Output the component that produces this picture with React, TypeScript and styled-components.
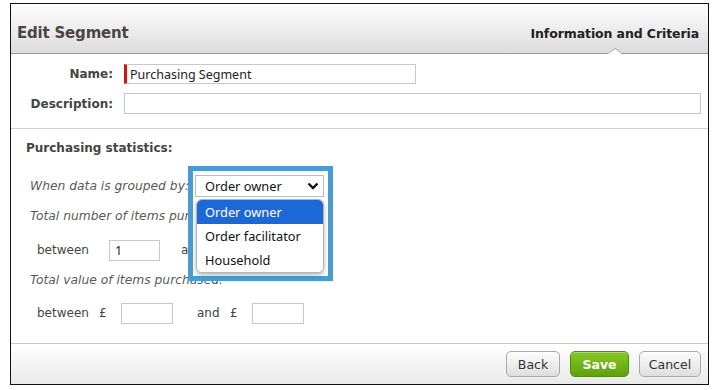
import * as React from 'react';
import styled, { createGlobalStyle, css } from 'styled-components';

const GlobalStyle = createGlobalStyle`
  html, body {
    margin: 0;
    padding: 0;
    background: #fff;
  }
  body {
    font-family: 'DejaVu Sans', Verdana, sans-serif;
    color: #333;
  }
`;

const Page = styled.div`
  padding: 3px 0 0 10px;
`;

const Dialog = styled.div`
  width: 697px;
  height: 380px;
  border: 1px solid #111;
  display: flex;
  flex-direction: column;
  background: #fff;
`;

const Header = styled.div`
  position: relative;
  flex-shrink: 0;
  border-bottom: 1px solid #9c9c9c;
  background: linear-gradient(#fefefe, #dcdcdc);
  display: flex;
  align-items: center;
  justify-content: space-between;
  padding: 5px 9px 0 6px;
  box-sizing: border-box;
  height: 50px;
`;

const Title = styled.h1`
  margin: 3px 0 0;
  font-size: 15px;
  font-weight: bold;
  color: #4a4540;
  letter-spacing: -0.2px;
`;

const TabLabel = styled.div`
  font-size: 12.5px;
  font-weight: bold;
  color: #222;
  margin-top: 4px;
  letter-spacing: -0.1px;
`;

const TabPointer = styled.div`
  position: absolute;
  left: 596px;
  bottom: -1px;
  width: 0;
  height: 0;
  border-left: 8px solid transparent;
  border-right: 8px solid transparent;
  border-bottom: 6px solid #9c9c9c;
  &::after {
    content: '';
    position: absolute;
    left: -7px;
    top: 1px;
    border-left: 7px solid transparent;
    border-right: 7px solid transparent;
    border-bottom: 5px solid #fff;
  }
`;

const InfoSection = styled.div`
  display: grid;
  grid-template-columns: 102px 1fr;
  column-gap: 11px;
  row-gap: 9px;
  align-items: center;
  padding: 10px 7px 14px 0;
  border-bottom: 1px solid #cfcfcf;
`;

const FieldLabel = styled.label`
  text-align: right;
  font-size: 12px;
  font-weight: bold;
  color: #444;
`;

const TextInput = styled.div<{ $width?: number; $required?: boolean; $h?: number }>`
  box-sizing: border-box;
  height: ${(p) => p.$h ?? 21}px;
  width: ${(p) => (p.$width ? `${p.$width}px` : '100%')};
  border: 1px solid #c8c8c8;
  background: #fff;
  font-family: 'Noto Sans', 'Open Sans', sans-serif;
  font-size: 12.5px;
  color: #222;
  display: flex;
  align-items: center;
  padding-left: 5px;
  flex-shrink: 0;
  ${(p) =>
    p.$required &&
    css`
      border-left: 3px solid #d81010;
      padding-left: 3px;
    `}
`;

const StatsSection = styled.div`
  position: relative;
  flex: 1;
  padding: 11px 0 0 15px;
`;

const Heading = styled.div`
  font-size: 12px;
  font-weight: bold;
  color: #444;
  height: 16px;
  line-height: 16px;
`;

const Line = styled.div<{ $h: number; $mt: number; $indent?: number }>`
  display: flex;
  align-items: center;
  height: ${(p) => p.$h}px;
  margin-top: ${(p) => p.$mt}px;
  padding-left: ${(p) => p.$indent ?? 4}px;
`;

const Hint = styled.span<{ $w?: number }>`
  font-size: 12.3px;
  font-style: italic;
  color: #5a5a5a;
  white-space: nowrap;
  width: ${(p) => (p.$w ? `${p.$w}px` : 'auto')};
  flex-shrink: 0;
`;

const Word = styled.span<{ $w?: number }>`
  font-size: 12px;
  color: #444;
  width: ${(p) => (p.$w ? `${p.$w}px` : 'auto')};
  flex-shrink: 0;
`;

const SelectWrap = styled.div`
  position: relative;
  z-index: 2;
`;

const SelectBox = styled.div`
  box-sizing: border-box;
  width: 129px;
  height: 22px;
  border: 1px solid #bdbdbd;
  background: #fff;
  display: flex;
  align-items: center;
  justify-content: space-between;
  padding: 0 4px 0 9px;
  font-family: 'Noto Sans', 'Open Sans', sans-serif;
  font-size: 12.8px;
  color: #111;
`;

const OptionList = styled.ul`
  position: absolute;
  left: 1px;
  top: 24px;
  width: 128px;
  margin: 0;
  padding: 0;
  list-style: none;
  background: #fff;
  border: 1px solid #b5b5b5;
  border-radius: 6px;
  overflow: hidden;
  box-shadow: 0 2px 4px rgba(0, 0, 0, 0.3);
  box-sizing: border-box;
`;

const Option = styled.li<{ $active?: boolean }>`
  height: 24px;
  display: flex;
  align-items: center;
  padding-left: 8px;
  font-family: 'Noto Sans', 'Open Sans', sans-serif;
  font-size: 12.8px;
  color: ${(p) => (p.$active ? '#fff' : '#111')};
  background: ${(p) => (p.$active ? '#1c68d6' : '#fff')};
`;

const Callout = styled.div`
  position: absolute;
  left: 177px;
  top: 37px;
  width: 145px;
  height: 115px;
  box-sizing: border-box;
  border: 5px solid #4a9bd2;
  background: #fff;
  z-index: 1;
`;

const Footer = styled.div`
  height: 41px;
  flex-shrink: 0;
  box-sizing: border-box;
  border-top: 1px solid #cacaca;
  background: linear-gradient(#fff, #e9e9e9);
  display: flex;
  justify-content: flex-end;
  align-items: flex-start;
  gap: 10px;
  padding: 7px 7px 0 0;
`;

const Button = styled.button<{ $primary?: boolean; $w: number }>`
  width: ${(p) => p.$w}px;
  height: 26px;
  border-radius: 5px;
  font-family: 'DejaVu Sans', Verdana, sans-serif;
  font-size: 12.5px;
  padding: 0;
  cursor: pointer;
  ${(p) =>
    p.$primary
      ? css`
          border: 1px solid #4f8d0c;
          background: linear-gradient(#86c924, #5ea10d);
          color: #fff;
          font-weight: bold;
          box-shadow: inset 0 1px 0 rgba(255, 255, 255, 0.35);
        `
      : css`
          border: 1px solid #a9a9a9;
          background: linear-gradient(#fdfdfd, #dedede);
          color: #333;
          box-shadow: inset 0 1px 0 #fff;
        `}
`;

const Chevron = () => (
  <svg width="12" height="8" viewBox="0 0 12 8">
    <path d="M1.5 1.5 L6 6 L10.5 1.5" fill="none" stroke="#111" strokeWidth="2.4" />
  </svg>
);

const groupOptions = ['Order owner', 'Order facilitator', 'Household'];

export default function App() {
  return (
    <Page>
      <GlobalStyle />
      <Dialog>
        <Header>
          <Title>Edit Segment</Title>
          <TabLabel>Information and Criteria</TabLabel>
          <TabPointer />
        </Header>

        <InfoSection>
          <FieldLabel>Name:</FieldLabel>
          <TextInput $width={292} $h={20} $required>
            Purchasing Segment
          </TextInput>
          <FieldLabel>Description:</FieldLabel>
          <TextInput />
        </InfoSection>

        <StatsSection>
          <Heading>Purchasing statistics:</Heading>
          <Line $h={22} $mt={19}>
            <Hint $w={165}>When data is grouped by:</Hint>
            <SelectWrap>
              <SelectBox>
                Order owner
                <Chevron />
              </SelectBox>
              <OptionList>
                {groupOptions.map((o, i) => (
                  <Option key={o} $active={i === 0}>
                    {o}
                  </Option>
                ))}
              </OptionList>
            </SelectWrap>
          </Line>
          <Line $h={20} $mt={9}>
            <Hint>Total number of items purchased:</Hint>
          </Line>
          <Line $h={22} $mt={13} $indent={11}>
            <Word $w={72}>between</Word>
            <TextInput $width={51}>1</TextInput>
            <Word style={{ marginLeft: 21 }}>and</Word>
          </Line>
          <Line $h={20} $mt={9}>
            <Hint>Total value of items purchased:</Hint>
          </Line>
          <Line $h={22} $mt={12} $indent={11}>
            <Word $w={62}>between</Word>
            <Word $w={22}>£</Word>
            <TextInput $width={52} />
            <Word style={{ marginLeft: 24 }} $w={33}>and</Word>
            <Word $w={22}>£</Word>
            <TextInput $width={52} />
          </Line>
          <Callout />
        </StatsSection>

        <Footer>
          <Button $w={54}>Back</Button>
          <Button $w={59} $primary>
            Save
          </Button>
          <Button $w={62}>Cancel</Button>
        </Footer>
      </Dialog>
    </Page>
  );
}
